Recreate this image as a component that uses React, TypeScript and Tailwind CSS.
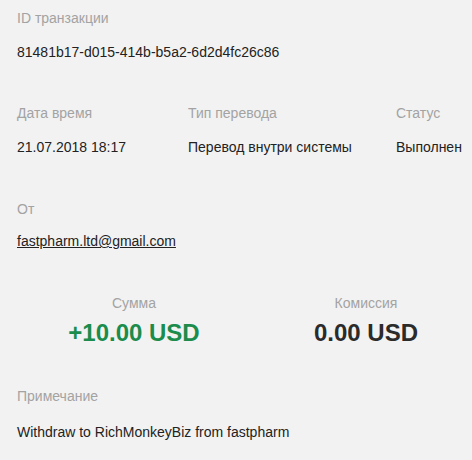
import React from "react";

const font = { fontFamily: '"Liberation Sans", Arial, sans-serif' };

function Label({ children }: { children: React.ReactNode }) {
  return <div className="text-[14px] leading-4 text-[#a3a3a3]">{children}</div>;
}
function Value({ children }: { children: React.ReactNode }) {
  return <div className="mt-[18px] text-[14px] leading-4 text-[#222222]">{children}</div>;
}

export default function App() {
  return (
    <div className="w-[472px] h-[460px] bg-[#f2f2f2] overflow-hidden" style={font}>
      <div className="pt-[10px] pl-[17px]">
        <section>
          <Label>ID транзакции</Label>
          <Value>81481b17-d015-414b-b5a2-6d2d4fc26c86</Value>
        </section>
        <section className="mt-[45px] flex">
          <div className="w-[171px]">
            <Label>Дата время</Label>
            <Value>21.07.2018 18:17</Value>
          </div>
          <div className="w-[208px]">
            <Label>Тип перевода</Label>
            <Value>Перевод внутри системы</Value>
          </div>
          <div>
            <Label>Статус</Label>
            <Value>Выполнен</Value>
          </div>
        </section>
        <section className="mt-[46px]">
          <Label>От</Label>
          <div className="mt-[16px] text-[14px] leading-4 text-[#222222]">
            <a className="underline">fastpharm.ltd@gmail.com</a>
          </div>
        </section>
      </div>
      <section className="mt-[46px] pl-[18px] grid grid-cols-2 w-[482px]">
        <div className="flex flex-col items-center">
          <Label>Сумма</Label>
          <div className="mt-[8px] text-[24px] leading-7 font-bold text-[#1b8c4c]">+10.00 USD</div>
        </div>
        <div className="flex flex-col items-center">
          <Label>Комиссия</Label>
          <div className="mt-[8px] text-[24px] leading-7 font-bold text-[#2b2b2b]">0.00 USD</div>
        </div>
      </section>
      <section className="mt-[41px] pl-[17px]">
        <Label>Примечание</Label>
        <div className="mt-[20px] text-[14px] leading-4 text-[#222222]">Withdraw to RichMonkeyBiz from fastpharm</div>
      </section>
    </div>
  );
}
